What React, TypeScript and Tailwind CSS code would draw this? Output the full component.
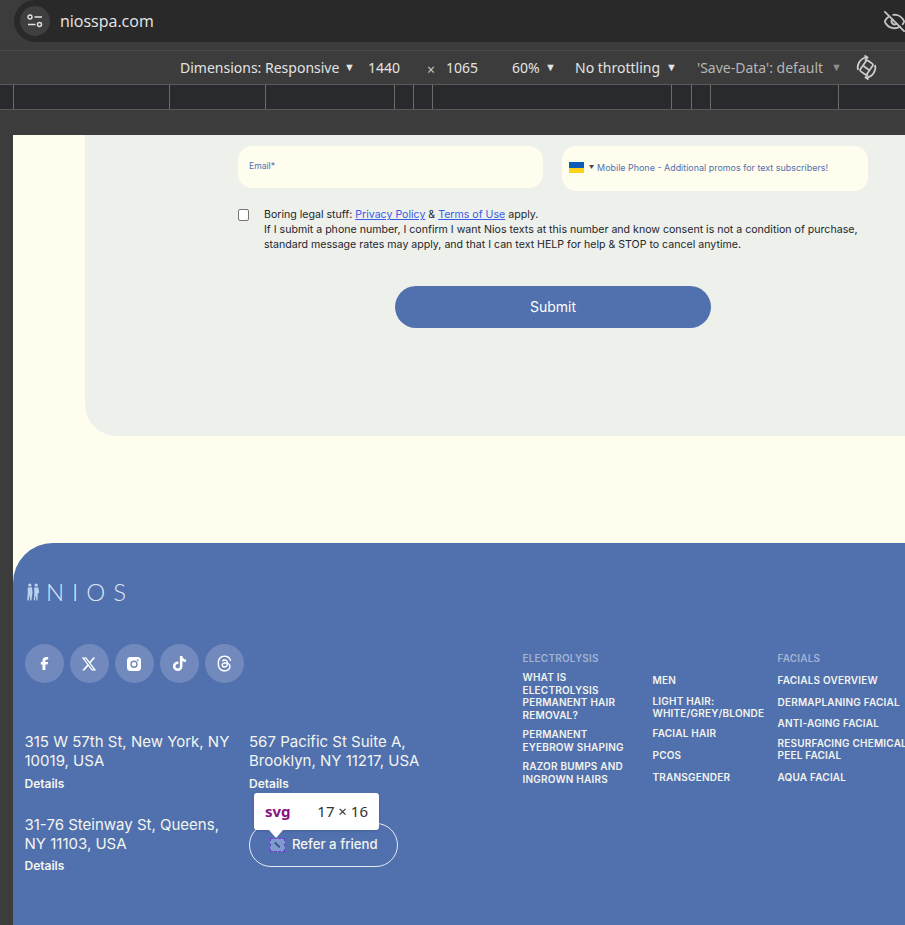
import { EyeOff } from "lucide-react";
import { FaFacebookF, FaXTwitter, FaTiktok, FaThreads } from "react-icons/fa6";

const rulerSegments = [
  "w-[156px]",
  "w-[96px]",
  "w-[129px]",
  "w-[19px]",
  "w-[19px]",
  "w-[239px]",
  "w-[20px]",
  "w-[19px]",
  "w-[128px]",
  "w-[67px]",
];

const InstagramIcon = () => (
  <svg width="14" height="14" viewBox="0 0 14 14">
    <rect x="0" y="0" width="14" height="14" rx="3.5" fill="#fff" />
    <circle cx="7" cy="7.2" r="3" fill="none" stroke="#7189bd" strokeWidth="1.4" />
    <circle cx="10.8" cy="3.2" r="0.9" fill="#7189bd" />
  </svg>
);

const socials = [
  <FaFacebookF key="f" size={13} />,
  <FaXTwitter key="x" size={16} />,
  <InstagramIcon key="i" />,
  <FaTiktok key="t" size={15} />,
  <FaThreads key="th" size={17} />,
];

const NavLink = ({ children, className = "" }: { children: React.ReactNode; className?: string }) => (
  <a className={`block text-[10px] leading-[12.7px] font-semibold tracking-[0.2px] text-[#f3f4ef] ${className}`}>{children}</a>
);

const Address = ({ lines, detailsClass = "mt-[6px]" }: { lines: string[]; detailsClass?: string }) => (
  <div>
    <p className="text-[15px] leading-[19px] text-[#f4f5ee]">
      {lines[0]}
      <br />
      {lines[1]}
    </p>
    <a className={`block ${detailsClass} text-[12px] leading-[15px] font-semibold text-[#f4f5ee]`}>Details</a>
  </div>
);

const Logo = () => (
  <div className="flex items-center gap-[6px] h-[20px]">
    <svg width="14" height="18" viewBox="0 0 13 17" fill="#b9d3ee">
      <circle cx="3.5" cy="2" r="1.6" />
      <path d="M1.5 4.2 5.5 4 6 9 5 16.5H3.8L3.5 11 2.3 16.5H1L1.6 9Z" />
      <circle cx="9.5" cy="2" r="1.6" />
      <path d="M7.5 4.2H11.5L12.4 9 11 10 10.8 16.5H9.7L9.2 11 8.2 16.5H7.2L7.8 9Z" />
    </svg>
    <span className="font-['Lato',sans-serif] font-light text-[24px] leading-[20px] tracking-[8px] text-[#dfe6f2]">NIOS</span>
  </div>
);

export default function App() {
  return (
    <div className="w-[905px] h-[925px] overflow-hidden flex flex-col bg-[#3c3c3c] font-['Inter',sans-serif]">
      {/* browser address bar */}
      <div className="h-[42px] shrink-0 ml-[14px] bg-[#292929] rounded-l-[21px] flex items-center justify-between">
        <div className="flex items-center gap-[10px] pl-[6px]">
          <div className="w-[30px] h-[30px] rounded-full bg-[#3f3f3f] flex items-center justify-center">
            <svg width="16" height="14" viewBox="0 0 16 14" fill="none" stroke="#e3e3e3" strokeWidth="1.4">
              <circle cx="3" cy="3" r="2" />
              <path d="M7.5 3H15M1 10.5H8.5" />
              <circle cx="12.5" cy="10.5" r="2" />
            </svg>
          </div>
          <span className="font-['Open_Sans',sans-serif] text-[16px] text-[#e8e8e8]">niosspa.com</span>
        </div>
        <EyeOff size={23} className="text-[#c2c2c2] shrink-0 mr-[-1px]" strokeWidth={2} />
      </div>

      <div className="h-[9px] shrink-0 bg-[#3b3b3b] border-b border-[#4a4a4a]" />

      {/* device toolbar */}
      <div className="h-[33px] shrink-0 bg-[#3c3c3c] flex items-center pl-[180px] font-['Noto_Sans',sans-serif] text-[14px] text-[#e3e3e3] whitespace-nowrap">
        <span className="w-[164px]">Dimensions: Responsive</span>
        <span className="w-[24px] text-[11px]">▼</span>
        <span className="w-[59px]">1440</span>
        <span className="w-[19px] text-[#c7c7c7] pt-[3px]">×</span>
        <span className="w-[66px]">1065</span>
        <span className="w-[30px]">60%</span>
        <span className="w-[33px] text-[11px] pl-[3px]">▼</span>
        <span className="w-[91px]">No throttling</span>
        <span className="w-[31px] text-[11px]">▼</span>
        <span className="w-[134px] text-[#b5b5b5]">'Save-Data': default</span>
        <span className="w-[24px] text-[11px] text-[#8d8d8d]">▼</span>
        <svg width="23" height="25" viewBox="0 0 23 25" fill="none" stroke="#cfcfcf" strokeWidth="1.7">
          <rect x="7.5" y="6" width="8" height="13" rx="1.5" transform="rotate(35 11.5 12.5)" />
          <path d="M8.5 11 14 15" />
          <path d="M3 15C1.5 10 5 3.5 11 2.5M20 10C21.5 15 18 21.5 12 22.5" />
          <path d="M9.5 0.5 12.5 2.5 10 5.5M13.5 24.5 10.5 22.5 13 19.5" />
        </svg>
      </div>

      {/* ruler */}
      <div className="h-[26px] shrink-0 bg-[#292a2d] border-y border-[#5a5a5a] flex pl-[13px]">
        {rulerSegments.map((w, i) => (
          <div key={i} className={`${w} border-l border-[#6b6b6b]`} />
        ))}
      </div>

      <div className="h-[25px] shrink-0 bg-[#3c3c3c]" />

      {/* page */}
      <div className="flex-1 ml-[13px] bg-[#fffdee] flex flex-col min-h-0">
        <div className="ml-[72px] h-[301px] shrink-0 bg-[#eef0eb] rounded-bl-[32px] pl-[153px]">
          <div className="flex gap-[19px] pt-[11px] items-start">
            <div className="w-[305px] h-[42px] rounded-[14px] bg-[#fffdee] pl-[11px] pt-[15px] text-[8.6px] leading-[11px] text-[#5070ae]">Email*</div>
            <div className="w-[306px] h-[45px] rounded-[14px] bg-[#fffdee] pl-[7px] pb-[2px] flex items-center text-[8.95px] text-[#5070ae]">
              <span className="w-[15px] h-[11px] flex flex-col shrink-0">
                <span className="h-1/2 bg-[#0f5cb8]" />
                <span className="h-1/2 bg-[#fcd116]" />
              </span>
              <span className="text-[5px] text-[#444] ml-[5px] mr-[3px]">▼</span>
              Mobile Phone - Additional promos for text subscribers!
            </div>
          </div>

          <div className="flex mt-[16px]">
            <div className="w-[11px] h-[12px] mt-[2px] rounded-[2px] bg-white border border-[#767676] shrink-0" />
            <p className="ml-[15px] text-[10.6px] leading-[15px] text-[#22262d] whitespace-nowrap">
              Boring legal stuff: <a className="text-[#3a5be8] underline">Privacy Policy</a> &amp;{" "}
              <a className="text-[#3a5be8] underline">Terms of Use</a> apply.
              <br />
              If I submit a phone number, I confirm I want Nios texts at this number and know consent is not a condition of purchase,
              <br />
              standard message rates may apply, and that I can text HELP for help &amp; STOP to cancel anytime.
            </p>
          </div>

          <button className="block mt-[34px] ml-[157px] w-[316px] h-[42px] rounded-full bg-[#5070ae] text-white text-[14px] font-normal pb-[2px]">
            Submit
          </button>
        </div>

        <div className="h-[107px] shrink-0" />

        {/* footer */}
        <footer className="flex-1 bg-[#5070ae] rounded-tl-[40px] pl-[11px] pt-[39px] overflow-hidden">
          <div className="pl-[2px]">
            <Logo />
          </div>

          <div className="flex mt-[42px]">
            <div className="w-[498.5px] shrink-0">
              <div className="flex gap-[6px] pl-[0.5px]">
                {socials.map((icon, i) => (
                  <div key={i} className="w-[39px] h-[39px] rounded-full bg-[#7189bd] flex items-center justify-center text-white">
                    {icon}
                  </div>
                ))}
              </div>

              <div className="grid grid-cols-[225px_1fr] mt-[49px]">
                <div className="flex flex-col gap-[24px] pl-[0.5px]">
                  <Address lines={["315 W 57th St, New York, NY", "10019, USA"]} />
                  <Address lines={["31-76 Steinway St, Queens,", "NY 11103, USA"]} detailsClass="mt-[5px]" />
                </div>
                <div>
                  <Address lines={["567 Pacific St Suite A,", "Brooklyn, NY 11217, USA"]} />
                  <div className="relative mt-[32px] w-[149px] h-[44px] rounded-full border border-[#e8ecf2] flex items-center pl-[20px] gap-[7px] text-[13.2px] font-medium text-[#f4f5ee]">
                    <span className="w-[15px] h-[14px] bg-[#7f9ccf] border border-dashed border-[#6a3fc8] flex items-center justify-center shrink-0">
                      <span className="block w-[7px] h-[1.5px] bg-[#3f4f98] rotate-45" />
                    </span>
                    Refer a friend

                    {/* devtools inspect tooltip */}
                    <div className="absolute left-[4px] top-[-31px] w-[125px] h-[37px] bg-white rounded-[3px] flex items-center justify-between px-[11px] shadow-sm">
                      <span className="font-['Noto_Sans',sans-serif] text-[15px] font-bold text-[#881280]">svg</span>
                      <span className="font-['Noto_Sans',sans-serif] text-[15px] font-normal text-[#333]">17 × 16</span>
                      <span className="absolute left-[15px] bottom-[-8px] w-0 h-0 border-x-[7px] border-x-transparent border-t-[8px] border-t-white" />
                    </div>
                  </div>
                </div>
              </div>
            </div>

            {/* nav columns */}
            <div className="flex mt-[8px] whitespace-nowrap">
              <div className="w-[130px] shrink-0">
                <h4 className="text-[10px] leading-[12px] font-semibold tracking-[0.2px] text-[#a3b3d4] mb-[7px]">ELECTROLYSIS</h4>
                <div className="flex flex-col gap-[6.4px]">
                  <NavLink>WHAT IS<br />ELECTROLYSIS<br />PERMANENT HAIR<br />REMOVAL?</NavLink>
                  <NavLink>PERMANENT<br />EYEBROW SHAPING</NavLink>
                  <NavLink>RAZOR BUMPS AND<br />INGROWN HAIRS</NavLink>
                </div>
              </div>
              <div className="w-[125px] shrink-0 pt-[22px]">
                <NavLink>MEN</NavLink>
                <NavLink className="mt-[8px]">LIGHT HAIR:<br />WHITE/GREY/BLONDE</NavLink>
                <NavLink className="mt-[7px]">FACIAL HAIR</NavLink>
                <NavLink className="mt-[9px]">PCOS</NavLink>
                <NavLink className="mt-[9px]">TRANSGENDER</NavLink>
              </div>
              <div className="shrink-0">
                <h4 className="text-[10px] leading-[12px] font-semibold tracking-[0.2px] text-[#a3b3d4] mb-[10px]">FACIALS</h4>
                <NavLink>FACIALS OVERVIEW</NavLink>
                <NavLink className="mt-[9px]">DERMAPLANING FACIAL</NavLink>
                <NavLink className="mt-[9px]">ANTI-AGING FACIAL</NavLink>
                <NavLink className="mt-[6.5px]">RESURFACING CHEMICAL<br />PEEL FACIAL</NavLink>
                <NavLink className="mt-[9px]">AQUA FACIAL</NavLink>
              </div>
            </div>
          </div>
        </footer>
      </div>
    </div>
  );
}
